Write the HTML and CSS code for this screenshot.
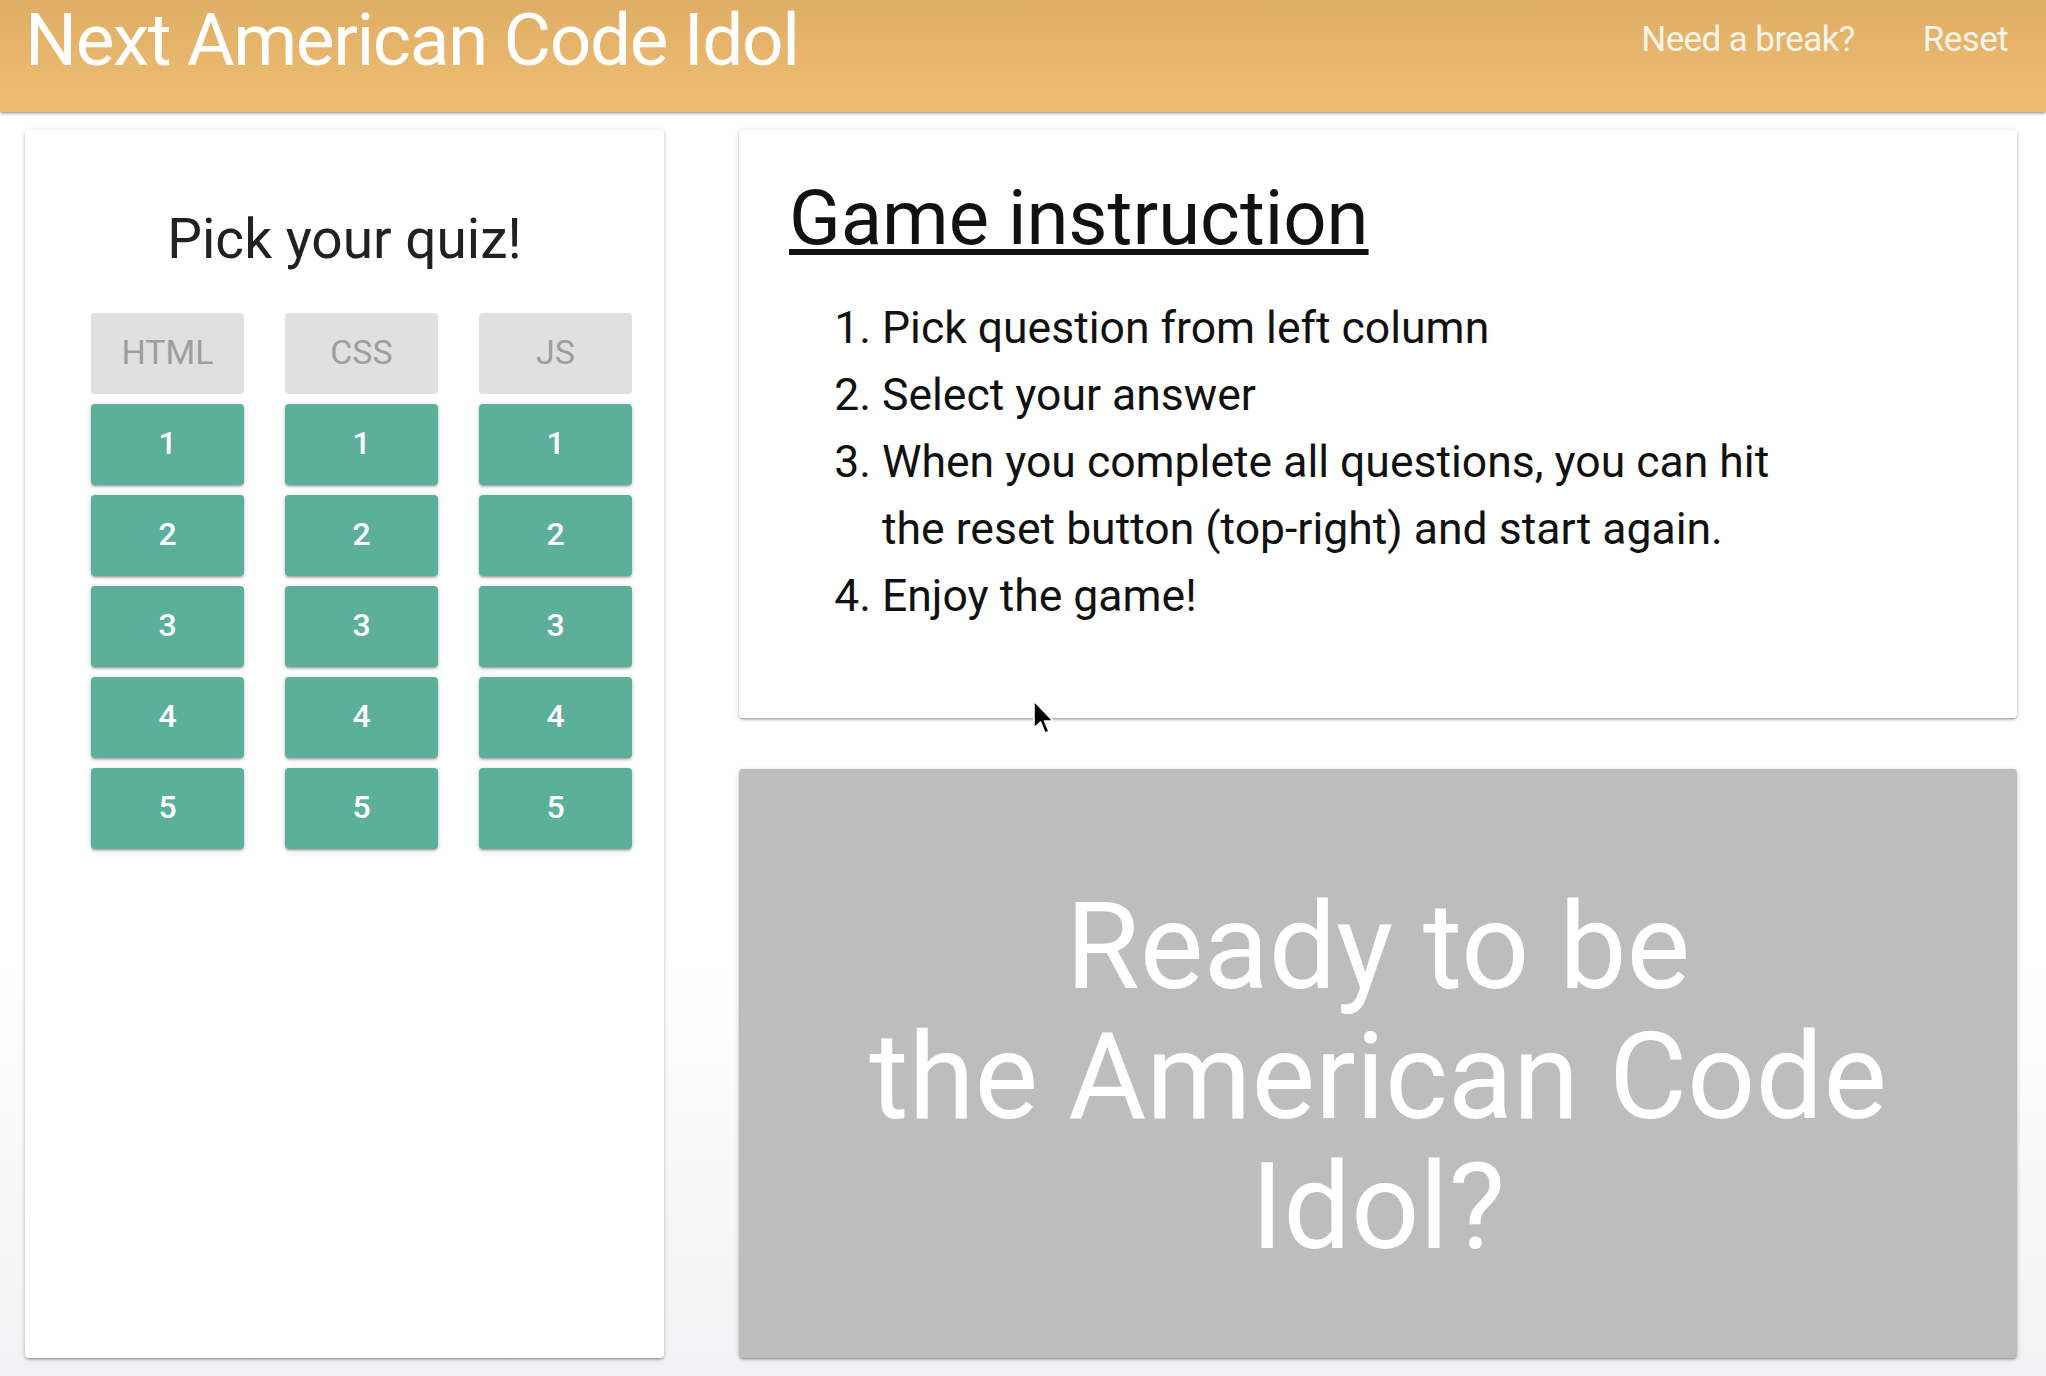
FILE: index.html
```html
<!DOCTYPE html>
<html lang="en">
<head>
<meta charset="utf-8">
<title>Next American Code Idol</title>
<link rel="stylesheet" href="styles.css">
</head>
<body>
<div class="page">
  <header class="topbar">
    <div class="brand">Next American Code Idol</div>
    <nav class="links">
      <a class="link">Need a break?</a>
      <a class="link">Reset</a>
    </nav>
  </header>
  <main class="main">
    <section class="card quiz">
      <h2 class="quiz-title">Pick your quiz!</h2>
      <div class="grid">
        <div class="label">HTML</div>
        <div class="label">CSS</div>
        <div class="label">JS</div>
        <button class="q">1</button><button class="q">1</button><button class="q">1</button>
        <button class="q">2</button><button class="q">2</button><button class="q">2</button>
        <button class="q">3</button><button class="q">3</button><button class="q">3</button>
        <button class="q">4</button><button class="q">4</button><button class="q">4</button>
        <button class="q">5</button><button class="q">5</button><button class="q">5</button>
      </div>
    </section>
    <div class="right">
      <section class="card instructions">
        <h1 class="inst-title">Game instruction</h1>
        <ol class="steps">
          <li>Pick question from left column</li>
          <li>Select your answer</li>
          <li>When you complete all questions, you can hit<br>the reset button (top-right) and start again.</li>
          <li>Enjoy the game!</li>
        </ol>
        <svg class="cursor" width="22" height="36" viewBox="0 0 22 36"><path d="M2 1 L2 28 L8.5 22 L13 33 L17 31.5 L12.5 21 L21 21 Z" fill="#000" stroke="#fff" stroke-width="1.6" stroke-linejoin="round"/></svg>
      </section>
      <section class="card ready">
        <p class="ready-text">Ready to be<br>the American Code Idol?</p>
      </section>
    </div>
  </main>
</div>
</body>
</html>
```

FILE: styles.css
```css
* { box-sizing: border-box; }
html, body { margin: 0; padding: 0; }
body {
  font-family: Roboto, "Noto Sans", "Liberation Sans", sans-serif;
  background: linear-gradient(180deg, #ffffff 0%, #ffffff 70%, #f2f2f4 100%);
  color: #212121;
}
.page {
  height: 100vh;
  display: flex;
  flex-direction: column;
}
.topbar {
  height: 112px;
  flex: none;
  display: flex;
  justify-content: space-between;
  align-items: flex-start;
  padding: 0 38px 0 25px;
  background: linear-gradient(180deg, #dfae66 0%, #efbd71 100%);
  box-shadow: 0 2px 2px rgba(0,0,0,.14), 0 3px 1px -2px rgba(0,0,0,.12), 0 1px 5px rgba(0,0,0,.2);
  position: relative;
  z-index: 1;
}
.brand {
  font-size: 73px;
  line-height: 80px;
  letter-spacing: -1.4px;
  color: #ffffff;
}
.links {
  display: flex;
  gap: 68px;
}
.link {
  font-size: 35px;
  line-height: 80px;
  letter-spacing: -0.6px;
  color: #fbf4e8;
}
.main {
  flex: 1;
  display: flex;
  gap: 75px;
  padding: 18px 29px 18px 25px;
}
.card {
  background: #fff;
  border-radius: 4px;
  box-shadow: 0 2px 2px rgba(0,0,0,.14), 0 3px 1px -2px rgba(0,0,0,.12), 0 1px 5px rgba(0,0,0,.2);
}
.quiz {
  width: 639px;
  flex: none;
  padding: 77px 32px 0 66px;
}
.quiz-title {
  margin: 0 -32px 42px -66px;
  text-align: center;
  font-size: 55px;
  line-height: 64px;
  font-weight: 400;
  color: #212121;
}
.grid {
  display: grid;
  grid-template-columns: repeat(3, 153px);
  column-gap: 41px;
  row-gap: 10px;
}
.label, .q {
  height: 81px;
  border-radius: 4px;
  display: flex;
  align-items: center;
  justify-content: center;
  padding: 0 0 4px 0;
  font-family: Roboto, "Noto Sans", sans-serif;
}
.label {
  background: #e0e0e0;
  color: #9e9e9e;
  font-size: 34px;
}
.q {
  border: none;
  background: #5cb09b;
  color: #fff;
  font-size: 32px;
  font-weight: 500;
  box-shadow: 0 2px 2px rgba(0,0,0,.14), 0 3px 1px -2px rgba(0,0,0,.12), 0 1px 5px rgba(0,0,0,.2);
}
.right {
  flex: 1;
  display: flex;
  flex-direction: column;
  gap: 51px;
}
.instructions {
  position: relative;
  padding: 45px 50px 88px 50px;
}
.inst-title {
  margin: 0;
  font-size: 76px;
  line-height: 86px;
  font-weight: 400;
  color: #111;
  text-decoration: underline;
  text-decoration-thickness: 6px;
  text-underline-offset: 5px;
}
.steps {
  margin: 34px 0 0 0;
  padding-left: 93px;
  font-size: 44.5px;
  line-height: 67px;
  color: #111;
}
.cursor {
  position: absolute;
  left: 293px;
  top: 570px;
}
.ready {
  flex: 1;
  background: #bdbdbd;
  padding: 113px 60px 0;
}
.ready-text {
  margin: 0;
  text-align: center;
  color: #fff;
  font-size: 120px;
  line-height: 130px;
}
```
